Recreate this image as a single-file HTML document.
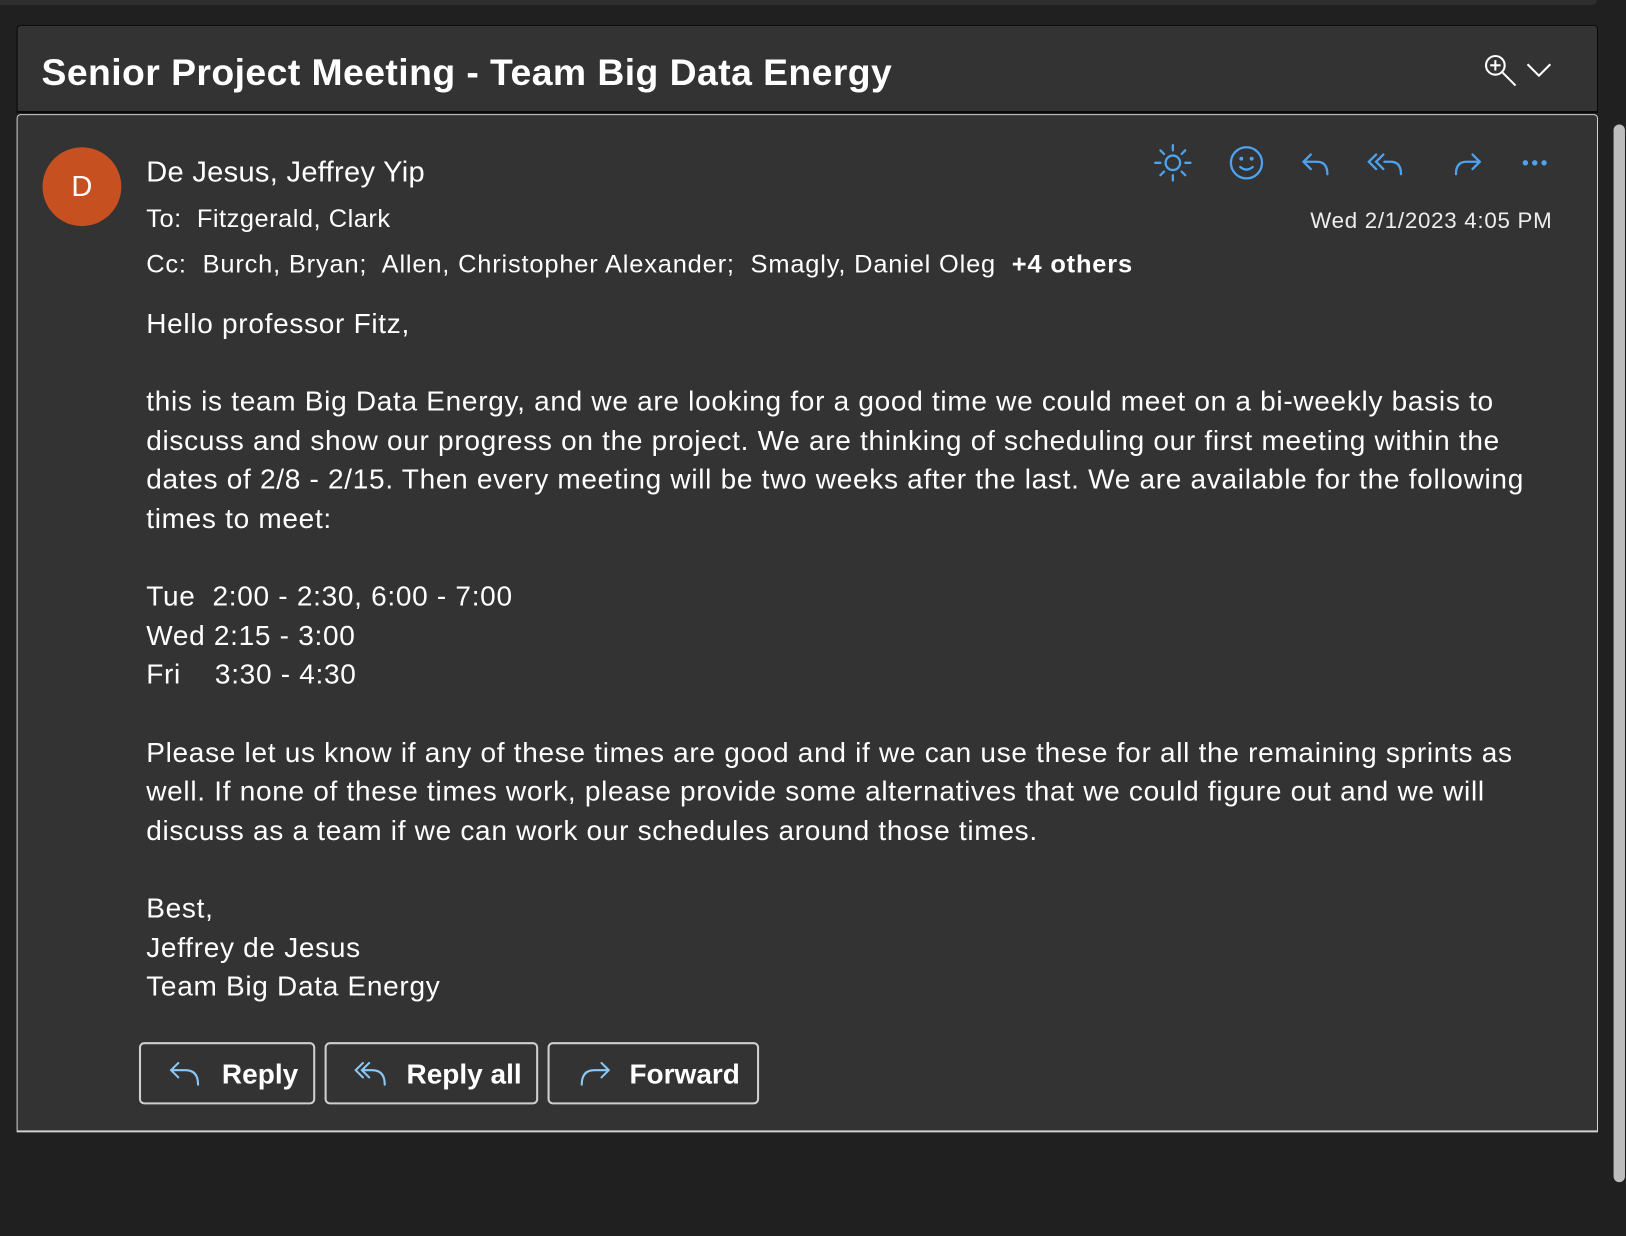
<!DOCTYPE html>
<html><head><meta charset="utf-8"><style>
html,body{margin:0;padding:0;background:#202020;width:1626px;height:1236px;overflow:hidden}
#w{position:absolute;left:0;top:0;width:1568px;height:1192px;transform-origin:0 0;transform:scale(1.037,1.037);font-family:"Liberation Sans",sans-serif;color:#fff}
.abs{position:absolute}
.hdr{left:16px;top:24px;width:1523px;height:82px;background:#333;border:1px solid #0a0a0a;border-bottom:2px solid #0a0a0a;border-radius:4px 4px 0 0}
.title{left:40px;top:49px;font-size:36px;font-weight:bold;white-space:nowrap;letter-spacing:0.42px}
.msg{left:16px;top:110px;width:1523px;height:979px;background:#333;border:1px solid #cfcfcf;border-bottom:2px solid #cfcfcf;border-radius:4px 4px 0 0}
.av{left:41px;top:142px;width:76px;height:76px;border-radius:50%;background:#c6501f;font-size:28px;line-height:76px;text-align:center}
.t{white-space:nowrap}
.body{left:141px;top:294px;font-size:27px;line-height:37.6px;white-space:pre;color:#fff;letter-spacing:0.68px}
.btn{position:absolute;top:1005px;height:60px;border:2px solid #cfcfcf;border-radius:5px;box-sizing:border-box;font-size:27px;font-weight:bold;line-height:58px;white-space:nowrap}
.btn svg{position:absolute;left:26px;top:15px}
.btn span{position:absolute;top:0}
</style></head><body><div id="w">
<div class="abs" style="left:0;top:0;width:1540px;height:5px;background:#2e2e2e;border-radius:0 0 6px 0"></div>
<div class="abs hdr"></div>
<div class="abs title">Senior Project Meeting - Team Big Data Energy</div>
<svg class="abs" style="left:1430px;top:50px" width="70" height="36" viewBox="0 0 70 36"><circle cx="12" cy="13" r="9" fill="none" stroke="#fff" stroke-width="2"/><path d="M12 8v10M7 13h10M18.5 19.5l13 13" stroke="#fff" stroke-width="2" fill="none"/><path d="M43 12l11 11 11-11" stroke="#fff" stroke-width="2" fill="none"/></svg>
<div class="abs msg"></div>
<div class="abs av">D</div>
<div class="abs t" style="left:141px;top:150px;font-size:28px;letter-spacing:0.3px">De Jesus, Jeffrey Yip</div>
<div class="abs t" style="left:141px;top:198px;font-size:24.5px;letter-spacing:0.5px">To:&nbsp; Fitzgerald, Clark</div>
<div class="abs t" style="left:141px;top:242px;font-size:24.5px;letter-spacing:0.8px">Cc:&nbsp; Burch, Bryan;&nbsp; Allen, Christopher Alexander;&nbsp; Smagly, Daniel Oleg&nbsp; <b>+4 others</b></div>
<div class="abs t" style="right:71px;top:201px;font-size:21.5px;color:#eee;letter-spacing:0.7px">Wed 2/1/2023 4:05 PM</div>
<svg class="abs" style="left:1110px;top:136px" width="390" height="42" viewBox="0 0 390 42" fill="none" stroke="#4ea3ef" stroke-width="2.2" stroke-linecap="round">
<circle cx="21" cy="21" r="7"/><path d="M21 4v5M21 33v5M4 21h5M33 21h5M9 9l3.5 3.5M29.5 29.5L33 33M33 9l-3.5 3.5M12.5 29.5L9 33"/>
<circle cx="92" cy="21" r="15"/><circle cx="87" cy="17" r="0.8" fill="#4ea3ef"/><circle cx="97" cy="17" r="0.8" fill="#4ea3ef"/><path d="M86 25q6 5 12 0"/>
<path d="M148 20h12q10 0 10 12M154 13l-7 7 7 7"/>
<path d="M225 20h6q10 0 10 12M224 13l-7 7 7 7M217 13l-7 7 7 7"/>
<path d="M316 20h-12q-10 0-10 12M310 13l7 7-7 7"/>
<circle cx="361" cy="21" r="1.5" fill="#4ea3ef"/><circle cx="370" cy="21" r="1.5" fill="#4ea3ef"/><circle cx="379" cy="21" r="1.5" fill="#4ea3ef"/>
</svg>
<div class="abs body">Hello professor Fitz,

this is team Big Data Energy, and we are looking for a good time we could meet on a bi-weekly basis to
discuss and show our progress on the project. We are thinking of scheduling our first meeting within the
dates of 2/8 - 2/15. Then every meeting will be two weeks after the last. We are available for the following
times to meet:

Tue  2:00 - 2:30, 6:00 - 7:00
Wed 2:15 - 3:00
Fri    3:30 - 4:30

Please let us know if any of these times are good and if we can use these for all the remaining sprints as
well. If none of these times work, please provide some alternatives that we could figure out and we will
discuss as a team if we can work our schedules around those times.

Best,
Jeffrey de Jesus
Team Big Data Energy</div>
<div class="btn" style="left:134px;width:170px"><svg width="34" height="28" viewBox="0 0 34 28" fill="none" stroke="#8cc8f5" stroke-width="2" stroke-linecap="round"><path d="M3 10h14q12 0 12 14M10 3L3 10l7 7"/></svg><span style="left:78px">Reply</span></div>
<div class="btn" style="left:313px;width:206px"><svg width="34" height="28" viewBox="0 0 34 28" fill="none" stroke="#8cc8f5" stroke-width="2" stroke-linecap="round"><path d="M10 10h8q12 0 12 14M15 3l-7 7 7 7M9 3L2 10l7 7"/></svg><span style="left:77px">Reply all</span></div>
<div class="btn" style="left:528px;width:204px"><svg width="34" height="28" viewBox="0 0 34 28" fill="none" stroke="#8cc8f5" stroke-width="2" stroke-linecap="round"><path d="M31 10H17Q5 10 5 24M24 3l7 7-7 7"/></svg><span style="left:77px">Forward</span></div>
<div class="abs" style="left:1556px;top:120px;width:11px;height:1020px;background:#bdbdbd;border-radius:6px"></div>
</div></body></html>
